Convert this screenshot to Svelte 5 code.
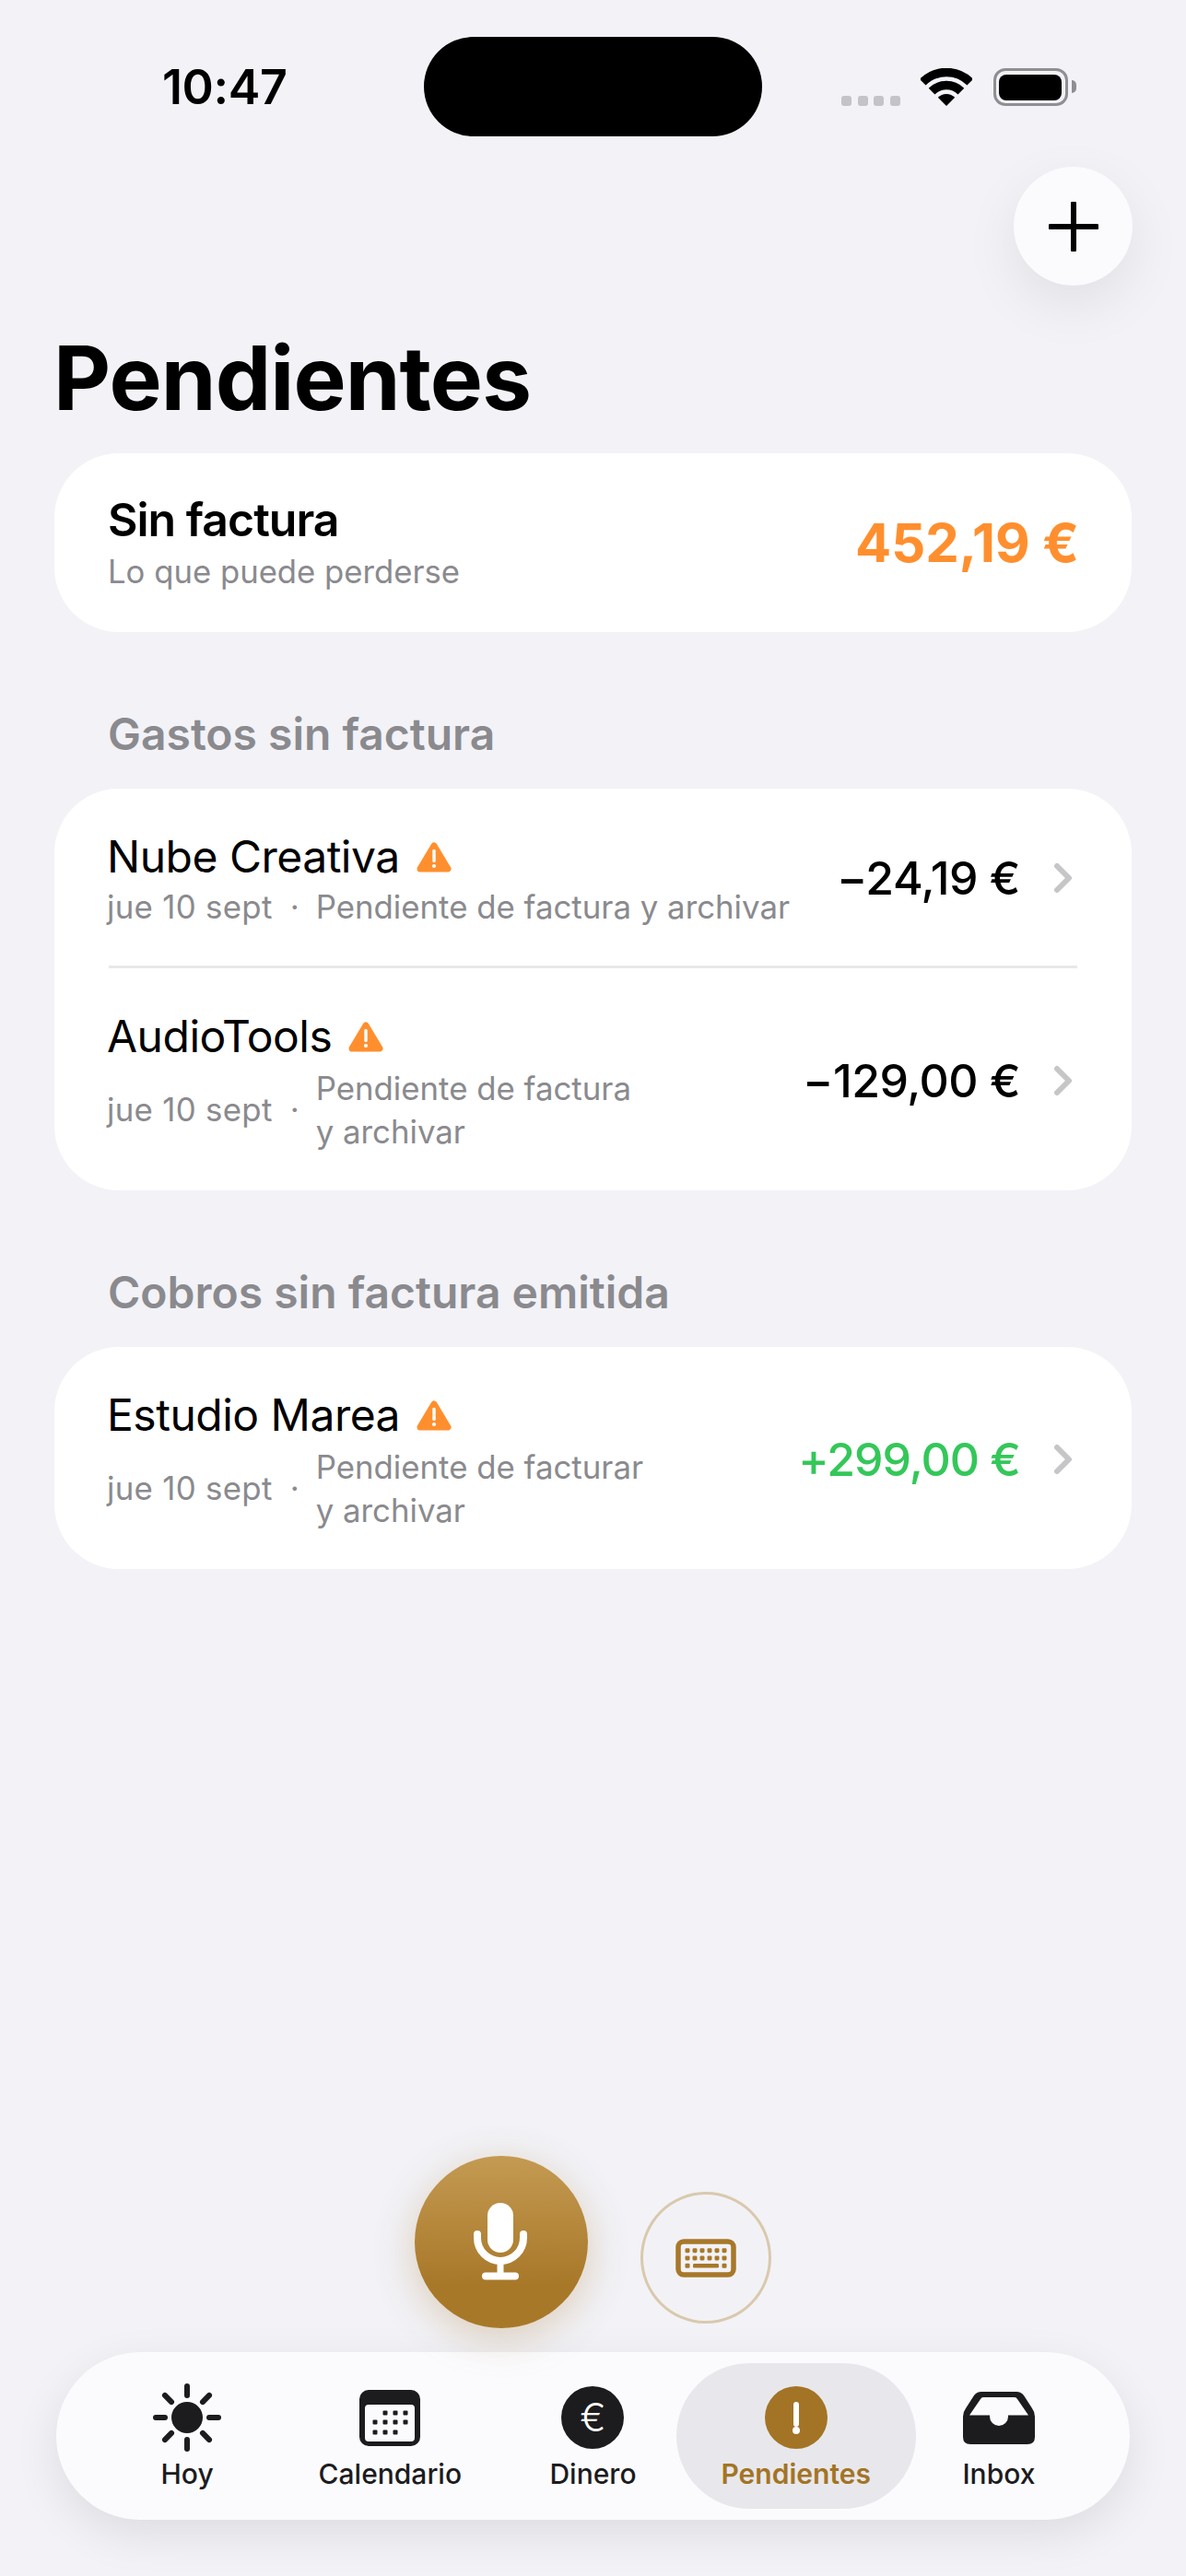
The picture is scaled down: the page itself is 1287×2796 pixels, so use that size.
<script>
  // Pendientes screen: items waiting for an invoice
  const sections = [
    {
      title: 'Gastos sin factura',
      rows: [
        { name: 'Nube Creativa', note: ['Pendiente de factura y archivar'], amount: '−24,19 €' },
        { name: 'AudioTools', note: ['Pendiente de factura', 'y archivar'], amount: '−129,00 €' },
      ],
    },
    {
      title: 'Cobros sin factura emitida',
      rows: [
        { name: 'Estudio Marea', note: ['Pendiente de facturar', 'y archivar'], amount: '+299,00 €', income: true },
      ],
    },
  ];

  const rays = [0, 45, 90, 135, 180, 225, 270, 315];
  const calDots = [
    [28, 25], [39, 25], [50, 25],
    [17, 35], [28, 35], [39, 35], [50, 35],
    [17, 46], [28, 46], [39, 46],
  ];
  const keyCols = [13, 21, 29, 37, 45, 53];
</script>

<div class="page">
  <header class="status">
    <div class="time">10:47</div>
    <div class="island"></div>
    <div class="indicators">
      <div class="signal"><i></i><i></i><i></i><i></i></div>
      <svg class="wifi" width="56" height="41" viewBox="0 0 56 41">
        <path d="M2.2 15.2a36.5 36.5 0 0 1 51.6 0" fill="none" stroke="#000" stroke-width="9.5" />
        <path d="M12.1 25.1a22.5 22.5 0 0 1 31.8 0" fill="none" stroke="#000" stroke-width="9.5" />
        <path d="M18.8 31.8a13 13 0 0 1 18.4 0L28 41z" fill="#000" />
      </svg>
      <div class="battery"><div class="battery-fill"></div></div>
    </div>
  </header>

  <button class="fab" aria-label="Añadir">
    <svg width="54" height="54" viewBox="0 0 54 54">
      <path d="M27 2v50M2 27h50" stroke="#000" stroke-width="6" stroke-linecap="round" />
    </svg>
  </button>

  <h1>Pendientes</h1>

  <section class="card summary">
    <div>
      <div class="summary-title">Sin factura</div>
      <div class="summary-sub">Lo que puede perderse</div>
    </div>
    <div class="summary-amount">452,19 €</div>
  </section>

  {#each sections as section}
    <h2>{section.title}</h2>
    <section class="card">
      {#each section.rows as row, i}
        <div class="row" class:divided={i > 0}>
          <div class="row-main">
            <div class="row-name">
              <span>{row.name}</span>
              <svg class="warn" width="38" height="33" viewBox="0 0 38 33">
                <path d="M19 4L34 29H4z" fill="#ff8f2e" stroke="#ff8f2e" stroke-width="7" stroke-linejoin="round" />
                <path d="M19 9.5v11" stroke="#fff" stroke-width="3.4" stroke-linecap="round" />
                <circle cx="19" cy="26" r="2.1" fill="#fff" />
              </svg>
            </div>
            <div class="row-sub">
              <span class="date">jue 10 sept</span>
              <span class="dot">·</span>
              <span class="note" class:wrapped={row.note.length > 1}>
                {#each row.note as line}<span class="note-line">{line}</span>{/each}
              </span>
            </div>
          </div>
          <div class="row-amount" class:income={row.income}>{row.amount}</div>
          <svg class="chevron" width="22" height="34" viewBox="0 0 22 34">
            <path d="M4 4l13 13L4 30" fill="none" stroke="#c6c6c8" stroke-width="6" stroke-linecap="round" stroke-linejoin="round" />
          </svg>
        </div>
      {/each}
    </section>
  {/each}

  <div class="dock">
    <div class="voice">
      <button class="mic" aria-label="Dictar">
        <svg width="64" height="90" viewBox="0 0 64 90">
          <rect x="17" y="2" width="28" height="54" rx="14" fill="#fff" />
          <path d="M6 36v4a25 25 0 0 0 50 0v-4" fill="none" stroke="#fff" stroke-width="8" stroke-linecap="round" />
          <path d="M31 65v16" stroke="#fff" stroke-width="7" />
          <path d="M15 81.5h32" stroke="#fff" stroke-width="8" stroke-linecap="round" />
        </svg>
      </button>
      <button class="keyboard" aria-label="Teclado">
        <svg width="66" height="42" viewBox="0 0 66 42">
          <rect x="3" y="3" width="60" height="36" rx="6" fill="none" stroke="#a87829" stroke-width="5.5" />
          {#each [12.7, 20.9] as y}
            {#each keyCols as x}
              <rect x={x - 2.5} y={y - 2.5} width="5" height="5" rx="1.4" fill="#a87829" />
            {/each}
          {/each}
          <rect x="10.5" y="26.8" width="5" height="5" rx="1.4" fill="#a87829" />
          <rect x="19" y="27" width="28" height="4.6" rx="1.4" fill="#a87829" />
          <rect x="50.5" y="26.8" width="5" height="5" rx="1.4" fill="#a87829" />
        </svg>
      </button>
    </div>

    <nav class="tabs">
      <div class="tab">
        <div class="slot">
          <svg width="74" height="74" viewBox="0 0 74 74">
            <circle cx="37" cy="37" r="17" fill="#1c1c1e" />
            {#each rays as r}
              <path d="M37 3v10" stroke="#1c1c1e" stroke-width="6" stroke-linecap="round" transform="rotate({r} 37 37)" />
            {/each}
          </svg>
        </div>
        <span>Hoy</span>
      </div>
      <div class="tab">
        <div class="slot">
          <svg width="66" height="61" viewBox="0 0 66 61">
            <rect width="66" height="61" rx="10" fill="#1c1c1e" />
            <rect x="6" y="16" width="54" height="40" rx="4" fill="#fbfbfe" />
            {#each calDots as [x, y]}
              <rect x={x - 2.5} y={y - 2.5} width="5" height="5" rx="1" fill="#1c1c1e" />
            {/each}
          </svg>
        </div>
        <span>Calendario</span>
      </div>
      <div class="tab">
        <div class="slot"><div class="euro">€</div></div>
        <span>Dinero</span>
      </div>
      <div class="tab active">
        <div class="slot">
          <svg width="68" height="68" viewBox="0 0 68 68">
            <circle cx="34" cy="34" r="34" fill="#a37425" />
            <path d="M34 20v21" stroke="#fff" stroke-width="6" stroke-linecap="round" />
            <circle cx="34" cy="48" r="4" fill="#fff" />
          </svg>
        </div>
        <span>Pendientes</span>
      </div>
      <div class="tab">
        <div class="slot">
          <svg width="78" height="57" viewBox="0 0 78 57">
            <path fill="#1c1c1e" fill-rule="evenodd" d="M20 0H58Q63 0 66 4L75 18Q78 22 78 27V49Q78 57 70 57H8Q0 57 0 49V27Q0 22 3 18L12 4Q15 0 20 0ZM22 6Q20 6 19 8L7 25.5H29V27a10 10 0 0 0 20 0V25.5H71L59 8Q58 6 56 6Z" />
          </svg>
        </div>
        <span>Inbox</span>
      </div>
    </nav>
  </div>
</div>

<style>
  :global(body) {
    margin: 0;
    background: #f2f2f7;
    font-family: Inter, "Liberation Sans", sans-serif;
  }

  button {
    padding: 0;
    border: none;
    display: flex;
    align-items: center;
    justify-content: center;
  }

  .page {
    min-height: 2796px;
    display: flex;
    flex-direction: column;
    box-sizing: border-box;
    padding-top: 40px;
    color: #000;
  }

  .status {
    display: grid;
    grid-template-columns: 460px 367px 1fr;
    height: 108px;
  }
  .time {
    padding-left: 176px;
    padding-top: 30px;
    font-size: 52px;
    line-height: 50px;
    font-weight: 600;
    letter-spacing: -0.4px;
  }
  .island {
    background: #000;
    border-radius: 54px;
  }
  .indicators {
    display: flex;
    align-items: flex-end;
    padding: 33px 0 33px 86px;
  }
  .signal {
    display: flex;
    gap: 6.5px;
  }
  .signal i {
    width: 11px;
    height: 11px;
    border-radius: 3px;
    background: #c4c4c8;
  }
  .wifi {
    margin-left: 22px;
  }
  .battery {
    position: relative;
    margin-left: 23px;
    width: 81px;
    height: 41px;
    box-sizing: border-box;
    border: 3.5px solid #8e8e93;
    border-radius: 13px;
    padding: 3.5px;
  }
  .battery::after {
    content: '';
    position: absolute;
    right: -12px;
    top: 10px;
    width: 5px;
    height: 14px;
    border-radius: 0 5px 5px 0;
    background: #8e8e93;
  }
  .battery-fill {
    height: 100%;
    background: #000;
    border-radius: 8px;
  }

  .fab {
    align-self: flex-end;
    margin: 33px 58px 0 0;
    width: 129px;
    height: 129px;
    border-radius: 50%;
    background: #fbfbfe;
    box-shadow: 0 20px 60px rgba(0, 0, 0, 0.08);
  }

  h1 {
    margin: 40px 0 0 58px;
    font-size: 96px;
    line-height: 120px;
    font-weight: 700;
    letter-spacing: -0.9px;
  }

  .card {
    margin: 0 59px;
    background: #fff;
    border-radius: 70px;
  }

  .summary {
    margin-top: 22px;
    height: 194px;
    box-sizing: border-box;
    padding: 0 57px 0 58px;
    display: flex;
    align-items: center;
    justify-content: space-between;
  }
  .summary-title {
    font-size: 50px;
    line-height: 60px;
    font-weight: 600;
    letter-spacing: -1px;
    margin-top: -2px;
  }
  .summary-sub {
    margin-top: 4px;
    font-size: 34.7px;
    line-height: 44px;
    color: #8a8a8e;
  }
  .summary-amount {
    font-size: 58px;
    font-weight: 700;
    color: #ff8f2e;
  }

  h2 {
    margin: 82px 0 30px 117px;
    font-size: 48px;
    line-height: 58px;
    font-weight: 600;
    color: #8a8a8e;
  }

  .row {
    margin: 0 59px;
    padding: 52px 0 40px;
    display: flex;
    align-items: center;
  }
  .row.divided {
    border-top: 3px solid #e8e8ea;
  }
  .row-main {
    flex: 1;
    min-width: 0;
    margin-left: -2px;
  }
  .row-name {
    display: flex;
    align-items: center;
    gap: 18px;
    font-size: 48px;
    line-height: 44px;
    letter-spacing: -0.5px;
  }
  .row-sub {
    margin-top: 9px;
    display: flex;
    align-items: center;
    font-size: 34.8px;
    line-height: 47px;
    color: #8a8a8e;
  }
  .date {
    letter-spacing: 0.3px;
  }
  .dot {
    margin: 0 18px 0 19px;
  }
  .note-line {
    display: block;
  }
  .note.wrapped {
    margin-top: 2px;
  }
  .row-amount {
    margin-bottom: 10px;
    font-size: 50px;
    font-weight: 500;
    white-space: nowrap;
    letter-spacing: -0.5px;
  }
  .row-amount.income {
    color: #34c759;
    letter-spacing: -1px;
  }
  .chevron {
    margin: 0 4px 10px 36px;
  }

  .dock {
    margin-top: auto;
    padding-bottom: 61px;
  }
  .voice {
    display: flex;
    align-items: flex-start;
    padding-left: 450px;
    gap: 57px;
    margin-bottom: 26px;
  }
  .mic {
    width: 188px;
    height: 187px;
    border-radius: 50%;
    background: linear-gradient(#c49a52, #a87829 75%);
    box-shadow: 0 10px 44px rgba(168, 120, 41, 0.3);
  }
  .keyboard {
    margin-top: 39px;
    width: 142px;
    height: 143px;
    box-sizing: border-box;
    border-radius: 50%;
    background: #f2f2f6;
    border: 3px solid #d9c9ac;
  }

  .tabs {
    margin: 0 61px;
    height: 182px;
    box-sizing: border-box;
    padding: 12px 32px;
    border-radius: 91px;
    background: #fbfbfe;
    box-shadow: 0 16px 50px rgba(0, 0, 0, 0.09);
    display: grid;
    grid-template-columns: repeat(5, 1fr);
  }
  .tab {
    display: flex;
    flex-direction: column;
    align-items: center;
    font-size: 30px;
    font-weight: 500;
    line-height: 36px;
    color: #1c1c1e;
  }
  .slot {
    margin-top: 25px;
    height: 68px;
    margin-bottom: 9px;
    display: flex;
    align-items: center;
    justify-content: center;
  }
  .tab.active {
    margin: 0 -20px;
    border-radius: 79px;
    background: #e8e8ec;
    color: #a37425;
    font-weight: 600;
  }
  .euro {
    width: 68px;
    height: 68px;
    border-radius: 50%;
    display: flex;
    align-items: center;
    justify-content: center;
    background: #1c1c1e;
    color: #fff;
    font-size: 42px;
    font-weight: 300;
  }
</style>
